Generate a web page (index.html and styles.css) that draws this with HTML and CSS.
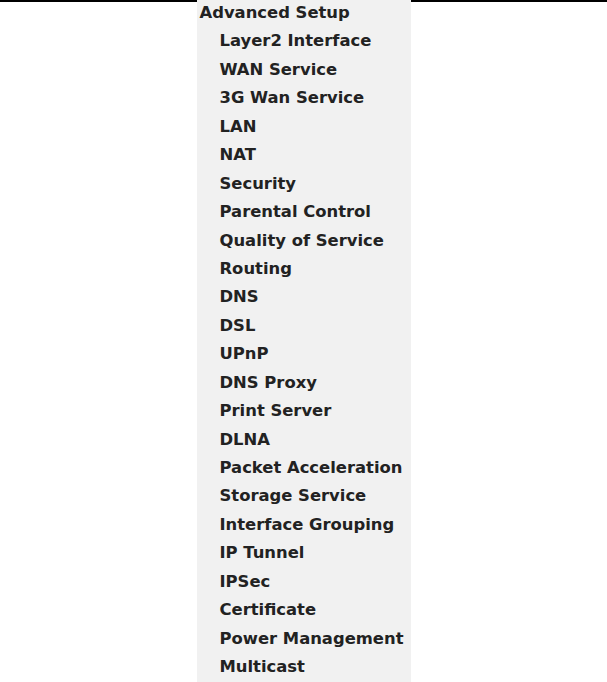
FILE: index.html
```html
<!DOCTYPE html>
<html lang="en">
<head>
<meta charset="UTF-8" />
<title>Advanced Setup</title>
<link rel="stylesheet" href="styles.css">
</head>
<body>

<div class="pagina">
  <div class="linha"></div>

  <nav class="menu">
    <a class="topo" href="#">Advanced Setup</a>
    <a href="#">Layer2 Interface</a>
    <a href="#">WAN Service</a>
    <a href="#">3G Wan Service</a>
    <a href="#">LAN</a>
    <a href="#">NAT</a>
    <a href="#">Security</a>
    <a href="#">Parental Control</a>
    <a href="#">Quality of Service</a>
    <a href="#">Routing</a>
    <a href="#">DNS</a>
    <a href="#">DSL</a>
    <a href="#">UPnP</a>
    <a href="#">DNS Proxy</a>
    <a href="#">Print Server</a>
    <a href="#">DLNA</a>
    <a href="#">Packet Acceleration</a>
    <a href="#">Storage Service</a>
    <a href="#">Interface Grouping</a>
    <a href="#">IP Tunnel</a>
    <a href="#">IPSec</a>
    <a href="#">Certificate</a>
    <a href="#">Power Management</a>
    <a href="#">Multicast</a>
  </nav>

  <div class="linha"></div>
</div>

</body>
</html>
```

FILE: styles.css
```css
body {
  margin: 0;
  background: white;
  font-family: "DejaVu Sans", Verdana, sans-serif;
}
.pagina {
  display: flex;
  min-height: 682px;
}
.linha {
  flex: 1;
  border-top: 2px solid black;
}
.menu {
  width: 214px;
  background: #f1f1f1;
  display: flex;
  flex-direction: column;
}
.menu a {
  display: block;
  color: #222;
  text-decoration: none;
  font-weight: bold;
  font-size: 16.4px;
  line-height: 24.43px;
  padding: 1px 0 3px 23px;
  white-space: nowrap;
}
.menu a.topo {
  padding-left: 3px;
}
.menu a:hover {
  color: #000;
}
```
